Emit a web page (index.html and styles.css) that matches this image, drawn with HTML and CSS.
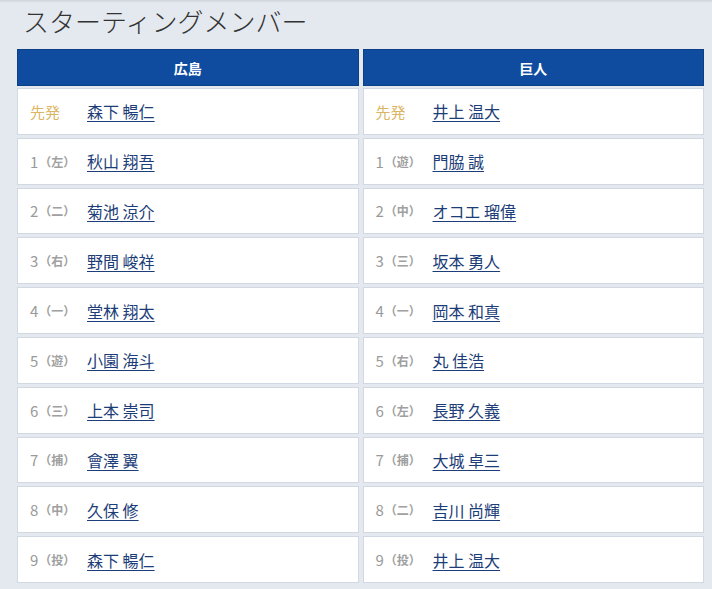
FILE: index.html
```html
<!DOCTYPE html>
<html lang="ja">
<head>
<meta charset="utf-8">
<link rel="stylesheet" href="styles.css">
</head>
<body>
<div class="topbar"></div>
<h2 class="title">スターティングメンバー</h2>
<div class="lineup">
  <div class="col">
    <div class="head">広島</div>
    <div class="cell"><span class="lbl starter">先発</span><a class="name" href="#">森下 暢仁</a></div>
    <div class="cell"><span class="lbl">1<span class="pos">（左）</span></span><a class="name" href="#">秋山 翔吾</a></div>
    <div class="cell"><span class="lbl">2<span class="pos">（二）</span></span><a class="name" href="#">菊池 涼介</a></div>
    <div class="cell"><span class="lbl">3<span class="pos">（右）</span></span><a class="name" href="#">野間 峻祥</a></div>
    <div class="cell"><span class="lbl">4<span class="pos">（一）</span></span><a class="name" href="#">堂林 翔太</a></div>
    <div class="cell"><span class="lbl">5<span class="pos">（遊）</span></span><a class="name" href="#">小園 海斗</a></div>
    <div class="cell"><span class="lbl">6<span class="pos">（三）</span></span><a class="name" href="#">上本 崇司</a></div>
    <div class="cell"><span class="lbl">7<span class="pos">（捕）</span></span><a class="name" href="#">會澤 翼</a></div>
    <div class="cell"><span class="lbl">8<span class="pos">（中）</span></span><a class="name" href="#">久保 修</a></div>
    <div class="cell"><span class="lbl">9<span class="pos">（投）</span></span><a class="name" href="#">森下 暢仁</a></div>
  </div>
  <div class="col">
    <div class="head">巨人</div>
    <div class="cell"><span class="lbl starter">先発</span><a class="name" href="#">井上 温大</a></div>
    <div class="cell"><span class="lbl">1<span class="pos">（遊）</span></span><a class="name" href="#">門脇 誠</a></div>
    <div class="cell"><span class="lbl">2<span class="pos">（中）</span></span><a class="name" href="#">オコエ 瑠偉</a></div>
    <div class="cell"><span class="lbl">3<span class="pos">（三）</span></span><a class="name" href="#">坂本 勇人</a></div>
    <div class="cell"><span class="lbl">4<span class="pos">（一）</span></span><a class="name" href="#">岡本 和真</a></div>
    <div class="cell"><span class="lbl">5<span class="pos">（右）</span></span><a class="name" href="#">丸 佳浩</a></div>
    <div class="cell"><span class="lbl">6<span class="pos">（左）</span></span><a class="name" href="#">長野 久義</a></div>
    <div class="cell"><span class="lbl">7<span class="pos">（捕）</span></span><a class="name" href="#">大城 卓三</a></div>
    <div class="cell"><span class="lbl">8<span class="pos">（二）</span></span><a class="name" href="#">吉川 尚輝</a></div>
    <div class="cell"><span class="lbl">9<span class="pos">（投）</span></span><a class="name" href="#">井上 温大</a></div>
  </div>
</div>
</body>
</html>
```
FILE: styles.css
```css
html, body {
  margin: 0;
  padding: 0;
  background: #e4e8ef;
  font-family: "Noto Sans CJK JP", "Noto Sans", sans-serif;
}
.topbar {
  height: 3px;
  background: linear-gradient(#cfd3da, #e4e8ef);
}
.title {
  margin: 0;
  padding: 0 0 0 23px;
  height: 46px;
  line-height: 36px;
  font-size: 26px;
  font-weight: 300;
  color: #333;
}
.lineup {
  display: flex;
  gap: 4px;
  padding: 0 8px 0 17px;
}
.col {
  flex: 1;
  display: flex;
  flex-direction: column;
  gap: 3px;
}
.head {
  height: 37px;
  margin-bottom: -1px;
  background: #0f4c9f;
  border: 1px solid #0c3f86;
  box-sizing: border-box;
  color: #fff;
  font-weight: 700;
  font-size: 14px;
  display: flex;
  align-items: center;
  justify-content: center;
}
.cell {
  height: 46.8px;
  box-sizing: border-box;
  background: #fff;
  border: 1px solid #d2d8e2;
  display: flex;
  align-items: center;
  padding-left: 12px;
}
.lbl {
  width: 57px;
  flex: none;
  color: #9a9a9a;
  font-size: 15px;
  display: flex;
  align-items: center;
}
.lbl.starter {
  color: #dcb665;
}
.pos {
  font-size: 12px;
  font-weight: 700;
  color: #a0a0a0;
  margin-left: 1px;
}
.name {
  color: #1c3d78;
  font-size: 16px;
  text-decoration: underline;
  text-underline-offset: 3px;
}
```
